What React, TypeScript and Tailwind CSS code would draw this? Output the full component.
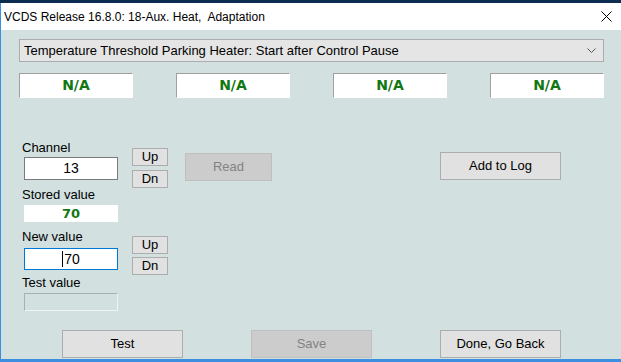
import { FC } from "react";

const font = "font-['Liberation_Sans',Arial,sans-serif]";

const Btn: FC<{ label: string; w: string; h: string; disabled?: boolean; className?: string }> = ({
	label,
	w,
	h,
	disabled,
	className,
}) => (
	<div
		className={`${w} ${h} ${className ?? ""} flex items-center justify-center border text-[13px] ${
			disabled ? "border-[#bfbfbf] bg-[#cccccc] text-[#838383]" : "border-[#adadad] bg-[#e1e1e1] text-black"
		}`}
	>
		{label}
	</div>
);

const NaBox: FC = () => (
	<div className="flex h-[25px] w-[114px] items-center justify-center border border-t-[#a0a0a0] border-l-[#a0a0a0] border-r-white border-b-white bg-white font-['DejaVu_Sans',Verdana,sans-serif] text-[14px] font-bold text-[#127812]">
		N/A
	</div>
);

const App: FC = () => {
	return (
		<div className={`flex h-[362px] w-[621px] flex-col overflow-hidden bg-[#d2e0e0] ${font}`}>
			{/* window frame top */}
			<div className="h-[3px] bg-[#0c2d4f]" />
			<div className="flex h-[27px] items-center justify-between border-l border-[#3b8ee0] bg-white pl-[3px] pr-[9px] text-[12px] text-black">
				<span>VCDS Release 16.8.0: 18-Aux. Heat,&nbsp; Adaptation</span>
				<svg width="11" height="11" viewBox="0 0 11 11">
					<path d="M0.5 0.5 L10.5 10.5 M10.5 0.5 L0.5 10.5" stroke="#000" strokeWidth="1" />
				</svg>
			</div>

			<div className="flex flex-1 flex-col border-b-[3px] border-l border-[#3b8ee0] pt-[9px] pl-[18px]">
				{/* selector */}
				<div className="flex h-[23px] w-[585px] items-center justify-between border border-[#adadad] bg-[#e5e5e5] pl-[4px] pr-[7px] text-[13px] text-black">
					<span>Temperature Threshold Parking Heater: Start after Control Pause</span>
					<svg width="9" height="6" viewBox="0 0 9 6">
						<path d="M0.5 0.5 L4.5 4.5 L8.5 0.5" fill="none" stroke="#555" strokeWidth="1" />
					</svg>
				</div>

				<div className="mt-[11px] flex w-[585px] justify-between">
					<NaBox />
					<NaBox />
					<NaBox />
					<NaBox />
				</div>

				{/* channel / values */}
				<div className="mt-[42px] flex text-[13px] text-black">
					<div className="ml-[3px] flex w-[97px] flex-col">
						<div className="h-[15px] leading-[15px]">Channel</div>
						<div className="mt-[2px] ml-[2px] flex h-[23px] w-[94px] items-center justify-center border border-[#7a7a7a] bg-white text-[14px]">
							13
						</div>
						<div className="mt-[7px] h-[15px] leading-[15px]">Stored value</div>
						<div className="mt-[3px] ml-[2px] flex h-[17px] w-[94px] items-center justify-center border border-white bg-white font-['DejaVu_Sans',Verdana,sans-serif] text-[13px] font-bold text-[#127812]">
							70
						</div>
						<div className="mt-[7px] h-[15px] leading-[15px]">New value</div>
						<div className="mt-[4px] ml-[2px] flex h-[22px] w-[94px] items-center justify-center border border-[#0078d7] bg-white text-[14px]">
							<span className="mr-[1px] inline-block h-[16px] w-[1px] bg-black" />
							70
						</div>
						<div className="mt-[5px] h-[15px] leading-[15px]">Test value</div>
						<div className="mt-[3px] ml-[2px] h-[18px] w-[94px] border border-t-[#a8b0b0] border-l-[#a8b0b0] border-r-[#eef4f4] border-b-[#eef4f4] bg-[#d2e0e0]" />
					</div>

					<div className="ml-[13px] flex w-[36px] flex-col text-[14px]">
						<Btn label="Up" w="w-[36px]" h="h-[18px]" className="mt-[8px]" />
						<Btn label="Dn" w="w-[36px]" h="h-[18px]" className="mt-[4px]" />
						<Btn label="Up" w="w-[36px]" h="h-[18px]" className="mt-[48px]" />
						<Btn label="Dn" w="w-[36px]" h="h-[18px]" className="mt-[3px]" />
					</div>

					<Btn label="Read" w="w-[87px]" h="h-[28px]" disabled className="mt-[13px] ml-[17px]" />
					<Btn label="Add to Log" w="w-[121px]" h="h-[28px]" className="mt-[12px] ml-[168px]" />
				</div>

				{/* bottom buttons */}
				<div className="mt-[19px] ml-[43px] flex gap-[68px]">
					<Btn label="Test" w="w-[121px]" h="h-[28px]" />
					<Btn label="Save" w="w-[121px]" h="h-[28px]" disabled />
					<Btn label="Done, Go Back" w="w-[121px]" h="h-[28px]" />
				</div>
			</div>
		</div>
	);
};

export default App;
